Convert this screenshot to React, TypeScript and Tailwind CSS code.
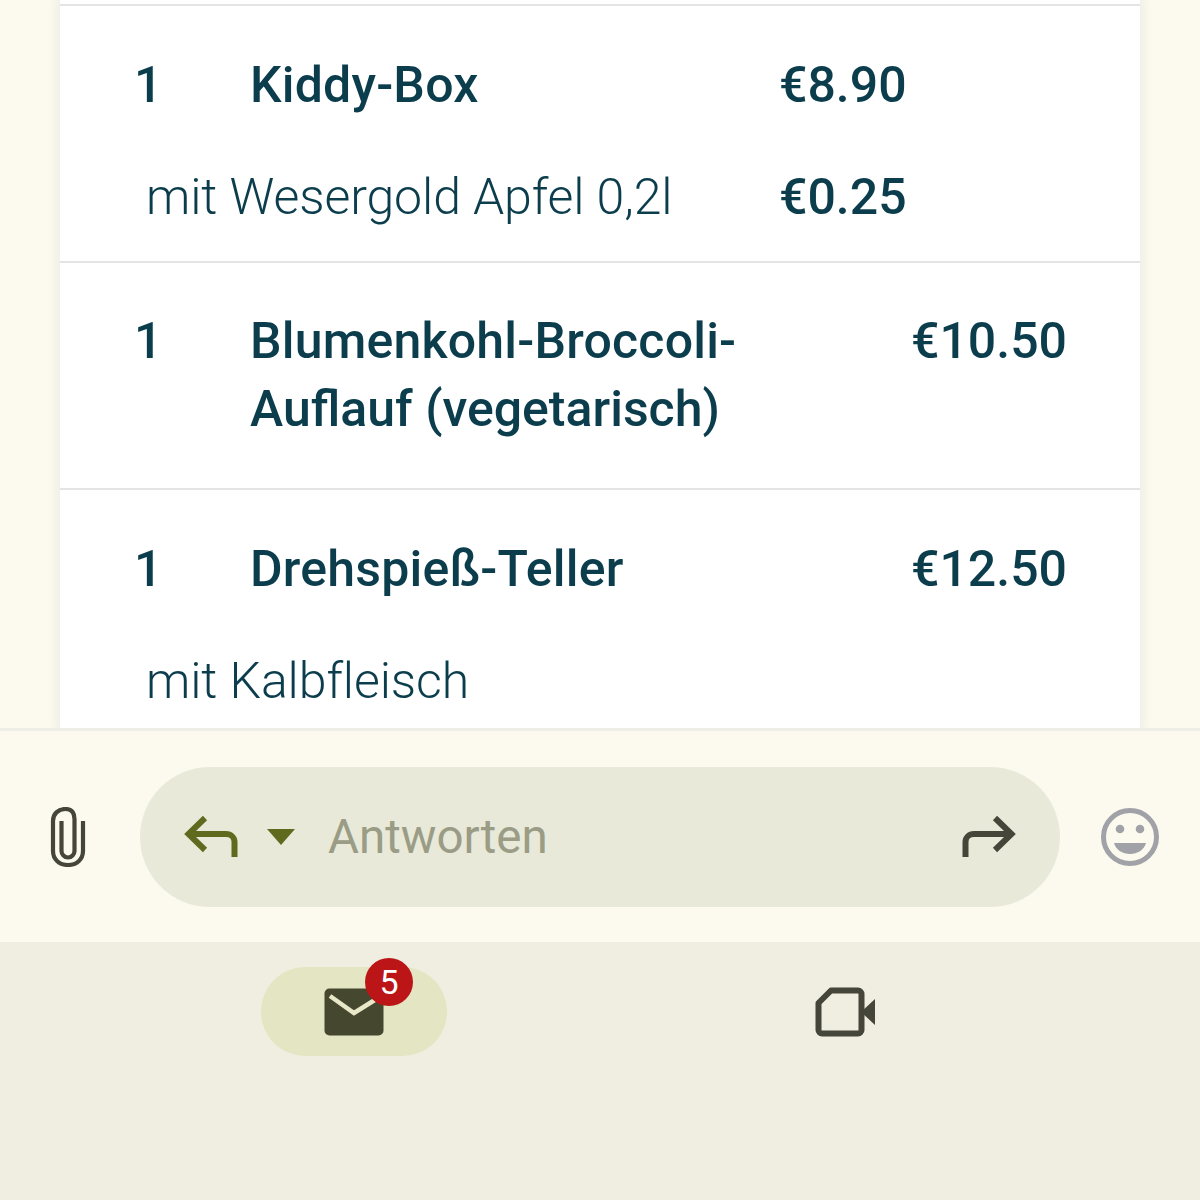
function Paperclip() {
  return (
    <svg width="36" height="60" viewBox="0 0 36 60" fill="none" stroke="#45453a" strokeWidth="4.200" strokeLinecap="butt">
      <path d="M24.500 12v32a6.500 6.500 0 0 1-13 0V14" />
      <path d="M33 14v30c0 8.500-6.500 14-15 14S3 52.500 3 44V14C3 7 8 2 15.500 2S24.500 7 24.500 12" />
    </svg>
  );
}

function ReplyArrow() {
  return (
    <svg width="54" height="44" viewBox="0 0 54 44" fill="none" stroke="#5f6a1e" strokeWidth="6">
      <path d="M21 3 4.500 19 21 35" />
      <path d="M4 19h38c5 0 8.500 3.500 8.500 8v15" />
    </svg>
  );
}

function ForwardArrow() {
  return (
    <svg width="54" height="44" viewBox="0 0 54 44" fill="none" stroke="#45453a" strokeWidth="6">
      <path d="M33 3l16.500 16L33 35" />
      <path d="M49 19H12c-5 0-8.500 3.500-8.500 8v15" />
    </svg>
  );
}

function Smiley() {
  return (
    <svg width="60" height="60" viewBox="0 0 60 60">
      <circle cx="30" cy="30" r="26.500" fill="none" stroke="#a1a2a8" strokeWidth="5" />
      <circle cx="20" cy="22" r="4.300" fill="#a1a2a8" />
      <circle cx="40" cy="22" r="4.300" fill="#a1a2a8" />
      <path d="M14 36h32c-2 7-8.500 11-16 11s-14-4-16-11z" fill="#a1a2a8" />
    </svg>
  );
}

function Mail() {
  return (
    <svg width="60" height="48" viewBox="0 0 60 48">
      <rect x="0.500" y="0.500" width="59" height="47" rx="5" fill="#45472f" />
      <path d="M6 8l24 17 24-15" fill="none" stroke="#e8e7c8" strokeWidth="4.500" />
    </svg>
  );
}

function Video() {
  return (
    <svg width="62" height="50" viewBox="0 0 62 50">
      <path d="M16 3.500h27a3.500 3.500 0 0 1 3.500 3.500v36a3.500 3.500 0 0 1-3.500 3.500H7A3.500 3.500 0 0 1 3.500 43V16z" fill="none" stroke="#45453a" strokeWidth="6" strokeLinejoin="round" />
      <path d="M46 25 60 12v26z" fill="#45453a" />
    </svg>
  );
}

export default function App() {
  return (
    <div
      className="flex h-[1200px] w-[1200px] flex-col overflow-hidden bg-[#f0ede1]"
      style={{ fontFamily: "Roboto, 'Noto Sans', sans-serif" }}
    >
      <div className="h-[728px] overflow-hidden bg-[#fcfaee] px-[60px]">
        <div className="h-full bg-white pt-[4px] text-[50px] leading-[68px] text-[#0b3d4d] shadow-[0_0_10px_4px_rgba(0,0,0,0.05)]">
          <div className="border-t-2 border-[#e4e4e4] pb-[30px] pl-[74px] pt-[45px]">
            <div className="flex font-medium">
              <div className="w-[116px]">1</div>
              <div className="w-[529px] tracking-[0.2px]">Kiddy-Box</div>
              <div>€8.90</div>
            </div>
            <div className="mt-[44px] flex">
              <div className="ml-[12px] w-[633px] font-light tracking-[-0.1px]">mit Wesergold Apfel 0,2l</div>
              <div className="font-medium">€0.25</div>
            </div>
          </div>
          <div className="border-t-2 border-[#e4e4e4] pb-[45px] pl-[74px] pt-[44px] font-medium">
            <div className="flex">
              <div className="w-[116px]">1</div>
              <div className="w-[661px] tracking-[0.2px]">
                Blumenkohl-Broccoli-
                <br />
                <span className="tracking-[0px]">Auflauf (vegetarisch)</span>
              </div>
              <div>€10.50</div>
            </div>
          </div>
          <div className="border-t-2 border-[#e4e4e4] pl-[74px] pt-[45px]">
            <div className="flex font-medium">
              <div className="w-[116px]">1</div>
              <div className="w-[661px] tracking-[0.2px]">Drehspieß-Teller</div>
              <div>€12.50</div>
            </div>
            <div className="ml-[12px] mt-[44px] font-light tracking-[-0.1px]">mit Kalbfleisch</div>
          </div>
        </div>
      </div>
      <div className="flex h-[214px] items-center border-t-[3px] border-[#eeede6] bg-[#fcfaee] pl-[50px]">
        <Paperclip />
        <div className="ml-[54px] flex h-[140px] w-[920px] items-center rounded-[70px] bg-[#e8e9d8] pl-[44px] pr-[44px]">
          <ReplyArrow />
          <div className="ml-[29px] h-0 w-0 border-x-[14px] border-t-[16px] border-x-transparent border-t-[#5f6a1e]" />
          <div className="ml-[33px] flex-1 text-[47.500px] leading-[68px] text-[#9a9c85]">Antworten</div>
          <ForwardArrow />
        </div>
        <div className="ml-[40px]">
          <Smiley />
        </div>
      </div>
      <div className="flex flex-1 items-start bg-[#f0ede1] pl-[261px] pt-[25px]">
        <div className="relative flex h-[89px] w-[186px] items-center justify-center rounded-[45px] bg-[#e3e5c3]">
          <Mail />
          <div className="absolute left-[104px] top-[-9px] flex h-[48px] w-[48px] items-center justify-center rounded-full bg-[#bb1518] text-[34px] leading-none text-white">
            5
          </div>
        </div>
        <div className="ml-[368px] mt-[20px]">
          <Video />
        </div>
      </div>
    </div>
  );
}
